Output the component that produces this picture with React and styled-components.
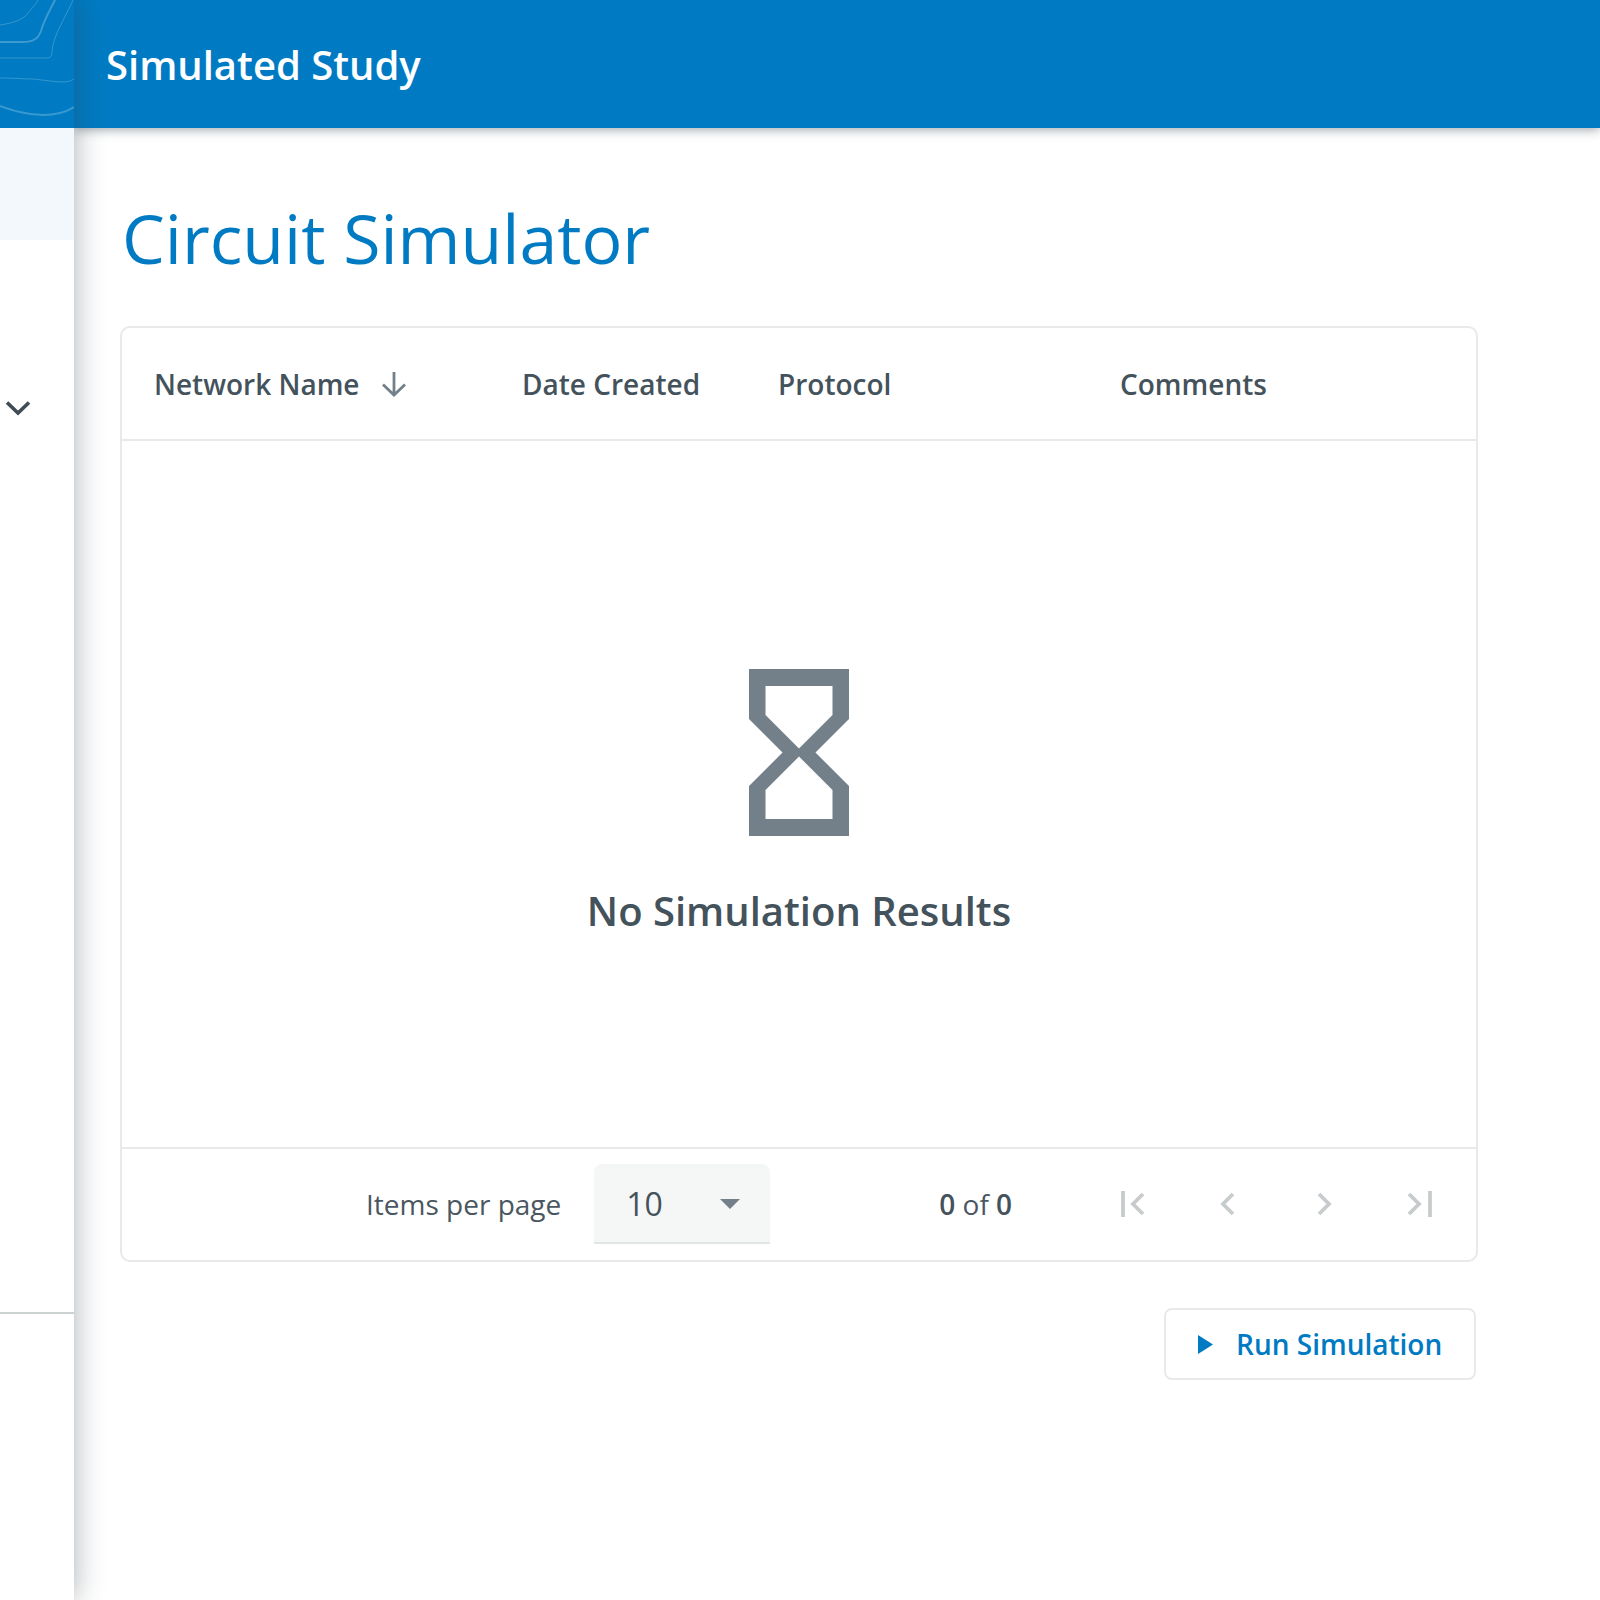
import React from 'react';
import styled, { createGlobalStyle } from 'styled-components';

const GlobalStyle = createGlobalStyle`
  html, body { margin: 0; padding: 0; background: #fff; }
  body { font-family: "Open Sans", "Liberation Sans", sans-serif; color: #3f4c55; }
`;

const Page = styled.div`
  display: flex;
  width: 1600px;
  height: 1600px;
  overflow: hidden;
`;

const Sidebar = styled.aside`
  position: relative;
  z-index: 2;
  flex: 0 0 74px;
  display: flex;
  flex-direction: column;
  background: #fff;
  box-shadow: 0 0 30px rgba(50, 65, 75, 0.42);
  clip-path: inset(0 -60px 0 0);
`;

const Logo = styled.div`
  height: 128px;
  background: #007bc3;
  svg { display: block; }
`;

const ActiveItem = styled.div`
  height: 112px;
  background: #f3f8fc;
`;

const ExpandRow = styled.div`
  display: flex;
  align-items: center;
  height: 56px;
  margin-top: 140px;
  padding-left: 5px;
`;

const SideSpacer = styled.div`
  height: 876px;
  border-bottom: 2px solid #cdd3d3;
`;

const Main = styled.div`
  flex: 1;
  display: flex;
  flex-direction: column;
  min-width: 0;
`;

const Header = styled.header`
  position: relative;
  z-index: 1;
  height: 128px;
  display: flex;
  align-items: center;
  padding-left: 32px;
  background: #007bc3;
  box-shadow: 0 2px 10px rgba(50, 65, 75, 0.45);
  color: #fff;
  font-size: 40px;
  font-weight: 600;
`;

const Content = styled.main`
  padding: 0 48px 0 46px;
  width: 1358px;
`;

const Title = styled.h1`
  margin: 62px 0 0 2px;
  height: 95px;
  font-size: 68px;
  line-height: 95px;
  font-weight: 400;
  color: #007bc3;
`;

const Card = styled.section`
  margin-top: 41px;
  height: 936px;
  box-sizing: border-box;
  display: flex;
  flex-direction: column;
  border: 2px solid #e8eaea;
  border-radius: 10px;
`;

const TableHead = styled.div`
  display: grid;
  grid-template-columns: 368px 256px 342px 1fr;
  align-items: center;
  height: 113px;
  box-sizing: border-box;
  padding-left: 32px;
  border-bottom: 2px solid #e8eaea;
`;

const HeadCell = styled.div`
  display: flex;
  align-items: center;
  gap: 22px;
  font-size: 28px;
  font-weight: 600;
  color: #44525c;
`;

const EmptyState = styled.div`
  flex: 1;
  display: flex;
  flex-direction: column;
  align-items: center;
  padding-top: 228px;
  gap: 47px;
`;

const EmptyText = styled.div`
  font-size: 40px;
  line-height: 56px;
  font-weight: 600;
  color: #44525c;
`;

const Footer = styled.div`
  height: 113px;
  box-sizing: border-box;
  display: flex;
  align-items: center;
  border-top: 2px solid #e8eaea;
  padding: 0 8px 2px 244px;
  white-space: nowrap;
`;

const PerPageLabel = styled.span`
  flex-shrink: 0;
  font-size: 28px;
  color: #4a5761;
`;

const Select = styled.div`
  display: flex;
  align-items: center;
  justify-content: space-between;
  flex-shrink: 0;
  width: 176px;
  height: 80px;
  margin-left: 33px;
  padding: 2px 30px 0 32px;
  box-sizing: border-box;
  background: #f5f7f7;
  border-bottom: 2px solid #e1e5e5;
  border-radius: 8px 8px 0 0;
  font-size: 32px;
  color: #44525c;
`;

const Caret = styled.span`
  width: 0;
  height: 0;
  border-left: 10px solid transparent;
  border-right: 10px solid transparent;
  border-top: 10px solid #73808a;
`;

const Count = styled.div`
  flex-shrink: 0;
  margin-left: 169px;
  font-size: 28px;
  color: #4a5761;
  b { font-weight: 600; color: #44525c; }
`;

const Pager = styled.div`
  display: flex;
  margin-left: auto;
`;

const PagerButton = styled.span`
  width: 96px;
  height: 48px;
  display: flex;
  align-items: center;
  justify-content: center;
`;

const Actions = styled.div`
  display: flex;
  justify-content: flex-end;
  margin: 46px 2px 0 0;
`;

const RunButton = styled.button`
  display: flex;
  align-items: center;
  gap: 23px;
  width: 312px;
  height: 72px;
  box-sizing: border-box;
  padding: 0 0 0 32px;
  background: #fff;
  border: 2px solid #e8eaea;
  border-radius: 8px;
  color: #007bc3;
  font-family: inherit;
  font-size: 28px;
  font-weight: 600;
`;

const Contours = () => (
  <svg width="74" height="128" viewBox="0 0 74 128" fill="none" stroke="#fff">
    <path d="M0 25C14 23 24 19 28 13C32 8 36 4 38 0" strokeOpacity=".2" strokeWidth="1" />
    <path d="M0 42H23C33 42 38 39 41 31C44 20 50 10 55 0" strokeOpacity=".24" strokeWidth="2" />
    <path d="M0 58H47C50 58 52 56 52 52C53 36 63 22 73 0" strokeOpacity=".2" strokeWidth="1" />
    <path d="M0 78C12 78 24 79 33 79C44 80 54 82 63 82C67 82 71 81 74 79" strokeOpacity=".2" strokeWidth="1" />
    <path d="M0 106C8 109 14 111 20 112C28 114 36 115 43 115C54 115 66 112 74 107" strokeOpacity=".22" strokeWidth="2" />
  </svg>
);

const Chevron = () => (
  <svg width="26" height="16" viewBox="0 0 26 16" fill="none" stroke="#3f4c55" strokeWidth="3.6">
    <path d="M2 2.5L13 13L24 2.5" />
  </svg>
);

const SortArrow = () => (
  <svg width="26" height="26" viewBox="0 0 26 26" fill="none" stroke="#73808a" strokeWidth="2.8">
    <path d="M13 1V24M2 13.5L13 24L24 13.5" />
  </svg>
);

const Hourglass = () => (
  <svg width="100" height="167" viewBox="0 0 100 167">
    <path
      fill="#73808a"
      fillRule="evenodd"
      d="M0 0H100V50L66.5 83.5L100 117V167H0V117L33.5 83.5L0 50ZM16.5 17V46L50 79.5L83.5 46V17ZM50 87.5L16.5 121V150H83.5V121Z"
    />
  </svg>
);

const PagerIcon = ({ d }) => (
  <svg width="26" height="26" viewBox="0 0 26 26" fill="none" stroke="#c8cbcd" strokeWidth="3.8">
    <path d={d} />
  </svg>
);

const PlayIcon = () => (
  <svg width="15" height="19" viewBox="0 0 15 19">
    <path d="M0 0L15 9.5L0 19Z" fill="#007bc3" />
  </svg>
);

export default function App() {
  return (
    <Page>
      <GlobalStyle />
      <Sidebar>
        <Logo><Contours /></Logo>
        <ActiveItem />
        <ExpandRow><Chevron /></ExpandRow>
        <SideSpacer />
      </Sidebar>
      <Main>
        <Header>Simulated Study</Header>
        <Content>
          <Title>Circuit Simulator</Title>
          <Card>
            <TableHead>
              <HeadCell>Network Name <SortArrow /></HeadCell>
              <HeadCell>Date Created</HeadCell>
              <HeadCell>Protocol</HeadCell>
              <HeadCell>Comments</HeadCell>
            </TableHead>
            <EmptyState>
              <Hourglass />
              <EmptyText>No Simulation Results</EmptyText>
            </EmptyState>
            <Footer>
              <PerPageLabel>Items per page</PerPageLabel>
              <Select>10<Caret /></Select>
              <Count><b>0</b> of <b>0</b></Count>
              <Pager>
                <PagerButton><PagerIcon d="M4 0V26M24 3L14 13L24 23" /></PagerButton>
                <PagerButton><PagerIcon d="M18 3L8 13L18 23" /></PagerButton>
                <PagerButton><PagerIcon d="M8 3L18 13L8 23" /></PagerButton>
                <PagerButton><PagerIcon d="M2 3L12 13L2 23M23 0V26" /></PagerButton>
              </Pager>
            </Footer>
          </Card>
          <Actions>
            <RunButton><PlayIcon />Run Simulation</RunButton>
          </Actions>
        </Content>
      </Main>
    </Page>
  );
}
